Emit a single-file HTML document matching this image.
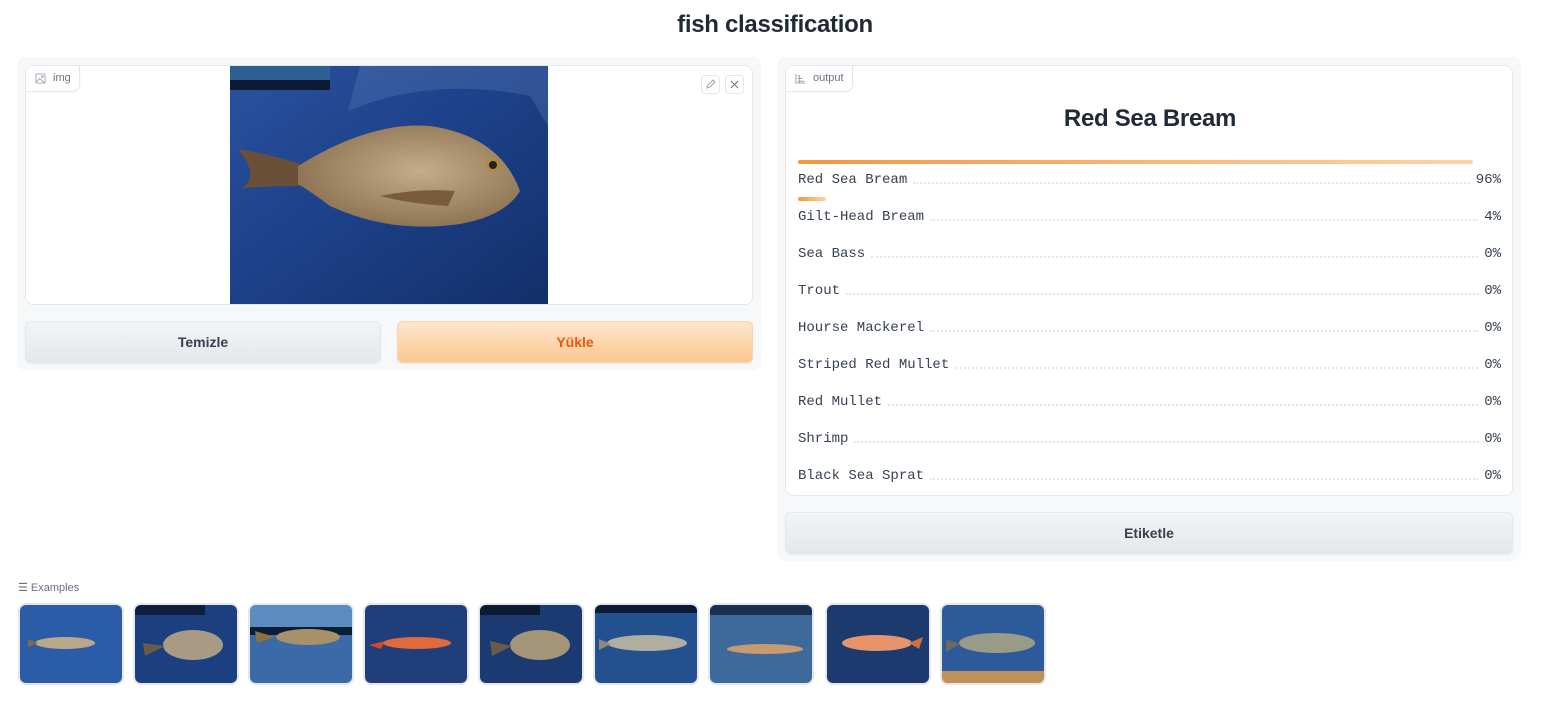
<!DOCTYPE html>
<html><head><meta charset="utf-8"><style>
*{box-sizing:border-box;margin:0;padding:0}
body{width:1550px;height:725px;background:#fff;font-family:"Liberation Sans",sans-serif;color:#1f2937;position:relative;overflow:hidden}
.abs{position:absolute}
h1{position:absolute;top:11px;left:0;width:1550px;text-align:center;font-size:24px;font-weight:bold;color:#1f2937;letter-spacing:-0.3px}
.panel{position:absolute;background:#f7f8fa;border-radius:8px}
.box{position:absolute;background:#fff;border:1px solid #e5e7eb;border-radius:8px;overflow:hidden}
.tag{position:absolute;left:0;top:0;height:26px;background:#fff;border:1px solid #e5e7eb;border-top:none;border-left:none;border-radius:0 0 8px 0;font-size:11px;color:#6b7280;padding:6px 8px 0 27px;box-shadow:0 1px 2px rgba(0,0,0,.05)}
.btn{position:absolute;height:42px;border-radius:6px;font-size:14px;font-weight:bold;display:flex;align-items:center;justify-content:center;border:1px solid #e5e7eb;background:linear-gradient(#f3f4f6,#e5e7eb);color:#374151;box-shadow:0 1px 2px rgba(0,0,0,.06)}
.row{position:absolute;left:12px;width:703px;font-family:"Liberation Mono",monospace;font-size:14px;color:#374151;display:flex;align-items:center}
.row .d{flex:1;border-bottom:2px dotted #e5e7eb;margin:6px 6px 0}
.bar{position:absolute;left:12px;height:4px;border-radius:3px;background:linear-gradient(90deg,#f59540,#fdd5a5)}
.th{position:absolute;top:603px;width:106px;height:82px;border:2px solid #e5e7eb;border-radius:8px;overflow:hidden}
.th svg{display:block}
</style></head><body>
<h1>fish classification</h1>

<div class="panel" style="left:17px;top:57px;width:744px;height:313px"></div>
<div class="box" style="left:25px;top:65px;width:728px;height:240px">
  <svg class="abs" style="left:204px;top:0" width="318" height="238" viewBox="0 0 318 238">
    <defs><linearGradient id="bg" x1="0" y1="0" x2="1" y2="1"><stop offset="0" stop-color="#2a52a0"/><stop offset=".5" stop-color="#1c4088"/><stop offset="1" stop-color="#132f68"/></linearGradient>
    <radialGradient id="fb" cx=".55" cy=".45" r=".6"><stop offset="0" stop-color="#c4ad8a"/><stop offset="1" stop-color="#8a7050"/></radialGradient></defs>
    <rect width="318" height="238" fill="url(#bg)"/>
    <rect x="0" y="0" width="100" height="14" fill="#2d5f95"/><rect x="0" y="14" width="100" height="10" fill="#0c1a33"/>
    <path d="M118 45 Q200 10 300 30 L318 60 L318 0 L130 0Z" fill="#5a7cb8" opacity=".35"/>
    <path d="M8 83 Q40 88 70 98 L72 120 Q40 120 12 122 Q30 110 8 83Z" fill="#6a5038"/>
    <path d="M68 100 Q140 55 200 60 Q270 70 290 125 Q275 150 230 158 Q160 168 100 140 Q80 125 68 118Z" fill="url(#fb)"/>
    <path d="M150 130 Q190 122 225 125 L218 140 Q180 138 150 130Z" fill="#7a5c3c"/>
    <circle cx="263" cy="99" r="7" fill="#b08a40"/><circle cx="263" cy="99" r="4" fill="#222"/>
  </svg>
  <div class="tag">img<svg class="abs" style="left:9px;top:7px" width="11" height="11" viewBox="0 0 12 12" fill="none" stroke="#9ca3af"><rect x="1" y="1" width="10" height="10" rx="1"/><path d="M1 10l4-4 6 5"/><circle cx="8" cy="4" r="1"/></svg></div>
  <div class="abs" style="left:675px;top:9px;width:19px;height:19px;border:1px solid #e5e7eb;border-radius:4px"><svg width="17" height="17" viewBox="0 0 17 17" fill="none" stroke="#9ca3af"><path d="M5 12l1-3 5-5 2 2-5 5z"/></svg></div>
  <div class="abs" style="left:699px;top:9px;width:19px;height:19px;border:1px solid #e5e7eb;border-radius:4px"><svg width="17" height="17" viewBox="0 0 17 17" fill="none" stroke="#6b7280"><path d="M5 5l7 7M12 5l-7 7"/></svg></div>
</div>
<div class="btn" style="left:25px;top:321px;width:356px">Temizle</div>
<div class="btn" style="left:397px;top:321px;width:356px;background:linear-gradient(#fde6cf,#fcc78f);border-color:#fbd3a8;color:#ea580c">Yükle</div>

<div class="panel" style="left:777px;top:57px;width:744px;height:504px"></div>
<div class="box" style="left:785px;top:65px;width:728px;height:431px">
  <div class="tag">output<svg class="abs" style="left:9px;top:7px" width="11" height="11" viewBox="0 0 12 12" fill="none" stroke="#9ca3af"><path d="M1 1v10h10M3 3h2v8M3 6h5M3 9h7"/></svg></div>
  <div class="abs" style="left:0;top:39px;width:728px;text-align:center;font-size:24px;font-weight:bold;color:#1f2937;letter-spacing:-0.3px">Red Sea Bream</div>
  <div class="bar" style="top:94px;width:675px"></div>
  <div class="row" style="top:106px"><span>Red Sea Bream</span><span class="d"></span><span>96%</span></div>
  <div class="bar" style="top:131px;width:28px"></div>
  <div class="row" style="top:143px"><span>Gilt-Head Bream</span><span class="d"></span><span>4%</span></div>
  <div class="row" style="top:180px"><span>Sea Bass</span><span class="d"></span><span>0%</span></div>
  <div class="row" style="top:217px"><span>Trout</span><span class="d"></span><span>0%</span></div>
  <div class="row" style="top:254px"><span>Hourse Mackerel</span><span class="d"></span><span>0%</span></div>
  <div class="row" style="top:291px"><span>Striped Red Mullet</span><span class="d"></span><span>0%</span></div>
  <div class="row" style="top:328px"><span>Red Mullet</span><span class="d"></span><span>0%</span></div>
  <div class="row" style="top:365px"><span>Shrimp</span><span class="d"></span><span>0%</span></div>
  <div class="row" style="top:402px"><span>Black Sea Sprat</span><span class="d"></span><span>0%</span></div>
</div>
<div class="btn" style="left:785px;top:512px;width:728px">Etiketle</div>

<div class="abs" style="left:18px;top:581px;font-size:11px;color:#6b7280">☰ Examples</div>

<div class="th" style="left:18px"><svg width="102" height="78"><rect width="102" height="78" fill="#2a5ca8"/><ellipse cx="45" cy="38" rx="30" ry="6" fill="#b9a98a"/><path d="M8 34l10 4-10 4z" fill="#7a6a50"/></svg></div>
<div class="th" style="left:133px"><svg width="102" height="78"><rect width="102" height="78" fill="#1c3f80"/><rect width="70" height="10" fill="#0e1f3d"/><ellipse cx="58" cy="40" rx="30" ry="15" fill="#a99a85"/><path d="M8 38l22 3-20 10z" fill="#6a5a48"/></svg></div>
<div class="th" style="left:248px"><svg width="102" height="78"><rect width="102" height="78" fill="#3a6aa8"/><rect y="0" width="102" height="22" fill="#5b8cc0"/><rect y="22" width="102" height="8" fill="#0d1d35"/><ellipse cx="58" cy="32" rx="32" ry="8" fill="#a89068"/><path d="M5 26l20 6-18 6z" fill="#8a7240"/></svg></div>
<div class="th" style="left:363px"><svg width="102" height="78"><rect width="102" height="78" fill="#203f7a"/><ellipse cx="52" cy="38" rx="34" ry="6" fill="#e06a3a"/><path d="M4 40l16-4-4 8z" fill="#d04a2a"/></svg></div>
<div class="th" style="left:478px"><svg width="102" height="78"><rect width="102" height="78" fill="#1b3a72"/><rect width="60" height="10" fill="#0c1a33"/><ellipse cx="60" cy="40" rx="30" ry="15" fill="#a59578"/><path d="M10 36l22 5-20 10z" fill="#6a5a48"/></svg></div>
<div class="th" style="left:593px"><svg width="102" height="78"><rect width="102" height="78" fill="#23508f"/><rect width="102" height="8" fill="#0c1a33"/><ellipse cx="52" cy="38" rx="40" ry="8" fill="#b0aea0"/><path d="M4 34l12 5-12 6z" fill="#8a8a80"/></svg></div>
<div class="th" style="left:708px"><svg width="102" height="78"><rect width="102" height="78" fill="#3d6a9a"/><rect width="102" height="10" fill="#1a2e50"/><ellipse cx="55" cy="44" rx="38" ry="5" fill="#c89a70"/></svg></div>
<div class="th" style="left:825px"><svg width="102" height="78"><rect width="102" height="78" fill="#1c3a6e"/><ellipse cx="50" cy="38" rx="35" ry="8" fill="#e8946a"/><path d="M82 38l14-6-4 12z" fill="#d07040"/></svg></div>
<div class="th" style="left:940px"><svg width="102" height="78"><rect width="102" height="78" fill="#2c5a9a"/><rect y="66" width="102" height="12" fill="#c0905a"/><ellipse cx="55" cy="38" rx="38" ry="10" fill="#9a9a88"/><path d="M4 34l14 5-14 8z" fill="#6a6a60"/></svg></div>
</body></html>
